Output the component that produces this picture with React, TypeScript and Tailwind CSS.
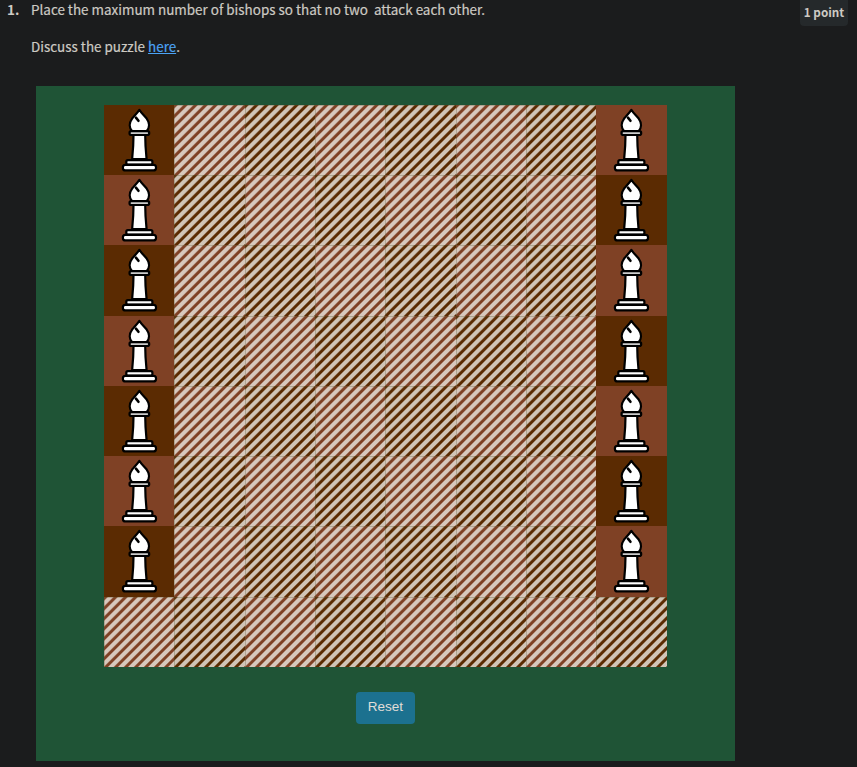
import React from "react";

const stripes =
  "bg-[repeating-linear-gradient(135deg,rgba(235,230,222,0.15)_0px,transparent_0.2px,transparent_2px,rgba(235,230,222,0.82)_3.2px,rgba(235,230,222,0.82)_6.1px,rgba(235,230,222,0.15)_7.096px)]";

function Bishop() {
  return (
    <svg viewBox="0 0 70 70" className="block h-full w-full" fill="#fff" stroke="#000" strokeWidth="2.2" strokeLinejoin="round" strokeLinecap="round">
      <path d="M29.4 29 C29.4 38 28.8 46 28 54 H42.4 C41.6 46 41 38 41 29 Z" />
      <path d="M28.2 26.5 C25 23 24.6 18 28 13.5 C30.5 10.5 33 8 35.2 4.8 C37 8 40 10.5 42.5 13.5 C45.8 18 45.4 23 42.2 26.5 Z" />
      <path d="M34.3 15.7 L31.8 12.6" strokeWidth="2.6" />
      <rect x="25.4" y="26.1" width="19.6" height="3.8" rx="1.7" fill="#ccc" />
      <rect x="22.2" y="55" width="26" height="4.4" rx="1.5" />
      <rect x="18.8" y="59.6" width="33" height="5.6" rx="2.5" />
    </svg>
  );
}

export default function App() {
  return (
    <div className="h-[767px] w-[857px] overflow-hidden bg-[#1b1c1d] font-['Noto_Sans_CJK_SC',sans-serif] text-[13.44px] text-[#cdcac3]">
      <header className="flex h-[86px] items-start pl-[7px] pr-[9px]">
        <span className="w-6 font-bold leading-[18px]">1.</span>
        <div className="flex-1 leading-[18px] [-webkit-text-stroke:0.2px]">
          <p className="whitespace-pre">Place the maximum number of bishops so that no two  attack each other.</p>
          <p className="mt-[19px]">
            Discuss the puzzle <a className="text-[#4ba3f5] underline">here</a>.
          </p>
        </div>
        <span className="h-[26px] w-12 rounded-b bg-[#25292b] text-center text-[11.7px] font-bold leading-6">1 point</span>
      </header>
      <main className="ml-9 flex h-[675px] w-[699px] flex-col bg-[#1f5436] pl-[68px] pt-[18.9px]">
        <div className="grid h-[562px] w-[562.5px] grid-cols-8 grid-rows-8">
          {Array.from({ length: 64 }, (_, i) => {
            const row = Math.floor(i / 8);
            const col = i % 8;
            const placed = row < 7 && (col === 0 || col === 7);
            const dark = row === 7 ? col % 2 === 1 : (row + col) % 2 === 0;
            return (
              <div key={i} className={dark ? "bg-[#5b2b02]" : "bg-[#7f4125]"}>
                {placed ? <Bishop /> : <div className={"h-full w-full shadow-[inset_1px_1px_0_rgba(90,85,50,0.3)] " + stripes} />}
              </div>
            );
          })}
        </div>
        <button className="ml-[252px] mt-[25.1px] h-8 w-[59px] rounded bg-[#1c718f] pb-[2px] font-['Liberation_Sans',sans-serif] text-[13.5px] text-[#e0ddd8]">Reset</button>
      </main>
    </div>
  );
}
